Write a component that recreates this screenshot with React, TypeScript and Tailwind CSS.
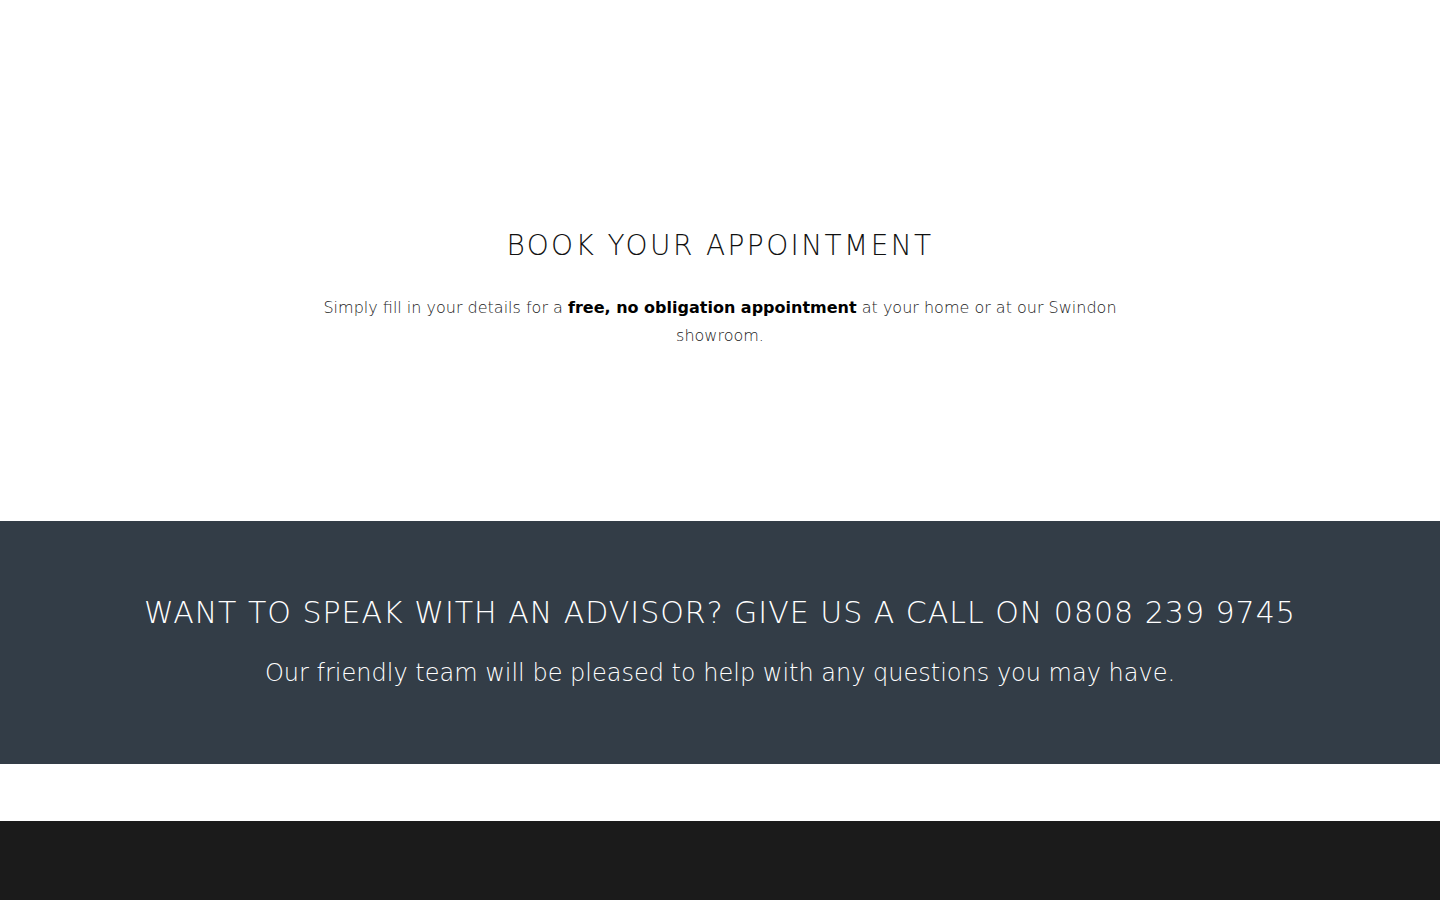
export default function App() {
  return (
    <div className="min-h-[900px] bg-white" style={{ fontFamily: '"DejaVu Sans", sans-serif' }}>
      {/* booking intro */}
      <section className="h-[521px] flex flex-col items-center pt-[226px]">
        <h1 className="text-[28px] leading-[40px] font-extralight tracking-[2.4px] text-[#111]">
          BOOK YOUR APPOINTMENT
        </h1>
        <p className="mt-[28px] w-[820px] text-center text-[16px] leading-[28px] font-extralight text-[#222]">
          Simply fill in your details for a <strong className="font-bold text-black">free, no obligation appointment</strong> at your home or at our Swindon showroom.
        </p>
      </section>

      {/* advisor call band */}
      <section className="h-[243px] bg-[#333d47] flex flex-col items-center pt-[74px]">
        <h2 className="text-[30px] leading-[36px] font-extralight tracking-[1px] text-white">
          WANT TO SPEAK WITH AN ADVISOR? GIVE US A CALL ON 0808 239 9745
        </h2>
        <p className="mt-[26px] text-[24px] leading-[32px] font-extralight text-white">
          Our friendly team will be pleased to help with any questions you may have.
        </p>
      </section>

      <div className="h-[57px] bg-white" />

      <footer className="h-[79px] bg-[#1b1b1b]" />
    </div>
  );
}
